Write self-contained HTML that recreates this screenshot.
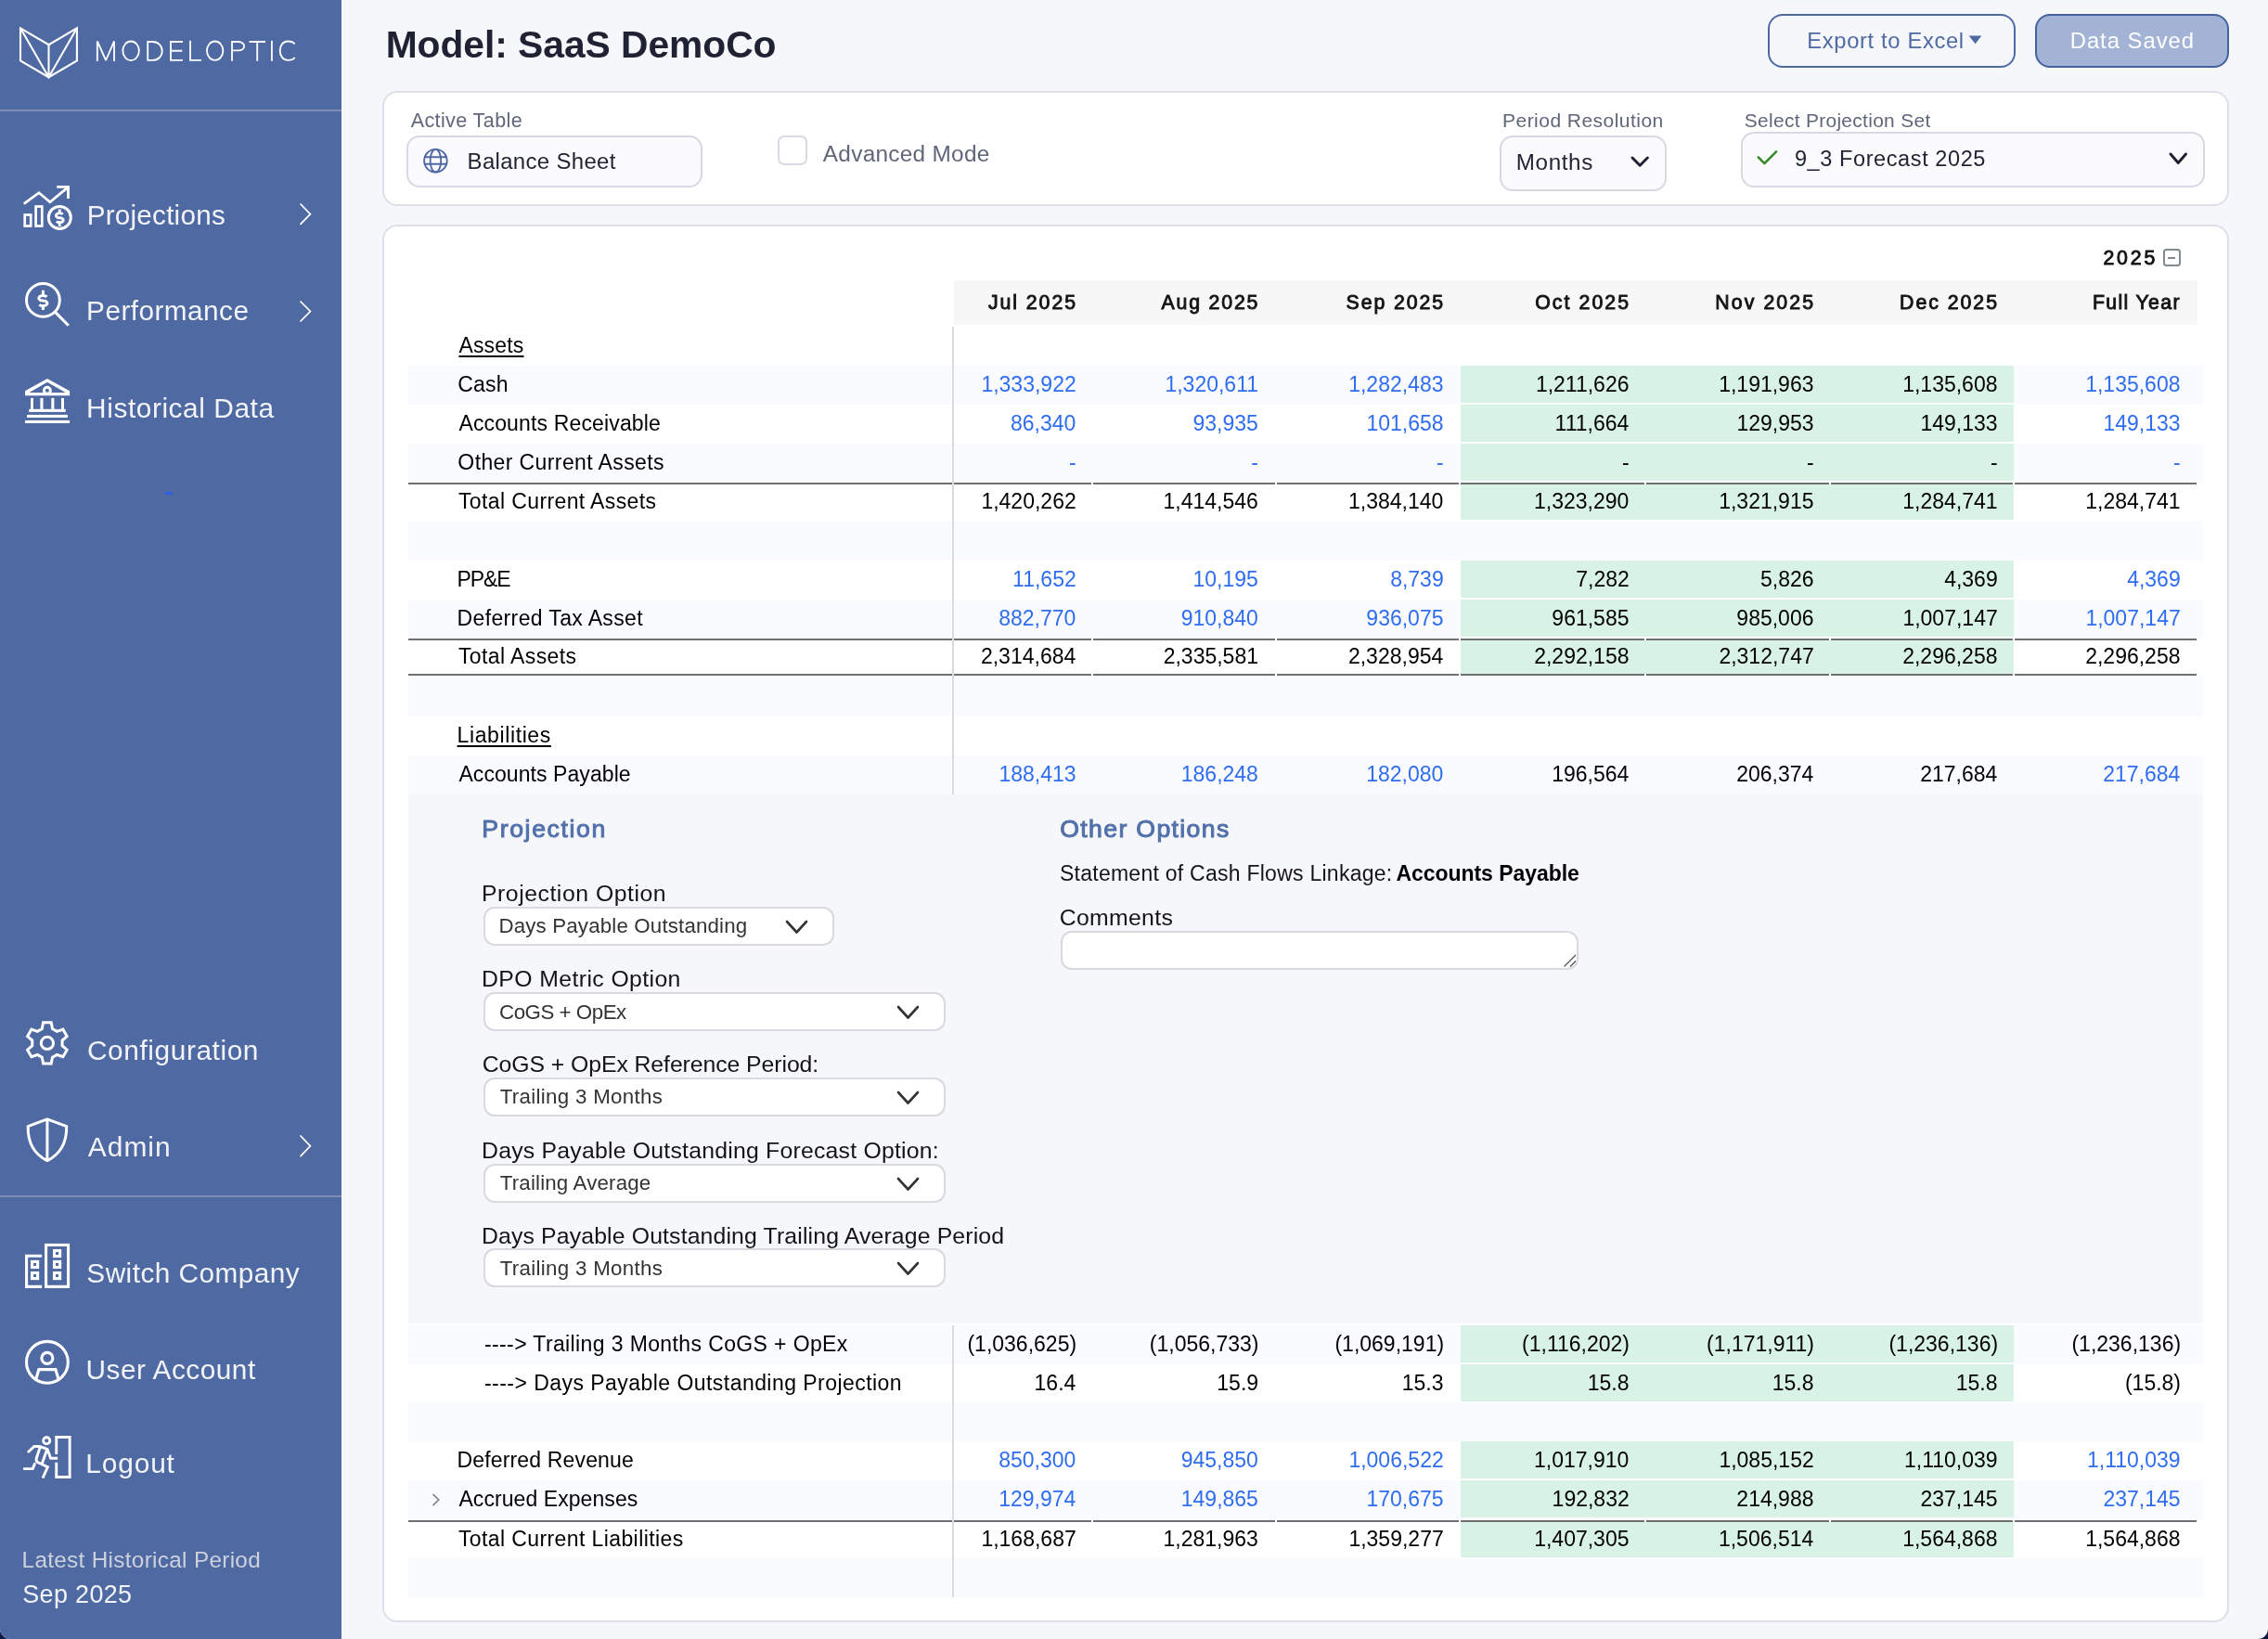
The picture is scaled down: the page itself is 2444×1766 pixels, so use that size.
<!DOCTYPE html><html><head><meta charset="utf-8"><title>ModelOptic</title><style>
html,body{margin:0;padding:0;width:2444px;height:1766px;overflow:hidden;background:#0c1b3f;}
#app{will-change:transform;position:absolute;left:0;top:0;width:2444px;height:1766px;background:#f6f7fb;border-radius:0 0 11px 11px;overflow:hidden;}
.t{position:absolute;white-space:nowrap;font-family:"Liberation Sans",sans-serif;}
.r{position:absolute;}
</style></head><body><div id="app">
<div class="r" style="left:0.00px;top:0.00px;width:368.00px;height:1766.00px;background:#4f6aa3;"></div>
<div class="r" style="left:368.00px;top:0.00px;width:1.00px;height:1766.00px;background:#ffffff;"></div>
<div class="r" style="left:0.00px;top:118.00px;width:368.00px;height:2.00px;background:#7d8db2;"></div>
<div class="r" style="left:0.00px;top:1288.00px;width:368.00px;height:2.00px;background:#7d8db2;"></div>
<svg class="r" style="left:15px;top:20px;width:80px;height:70px" viewBox="15 20 80 70"><g fill="none" stroke="#fff" stroke-width="2.1" stroke-linejoin="miter"><path d="M22,30.3 L52.5,48.2 L82.9,30.3 L82.9,65.5 L52.5,83.2 L22,65.5 Z"/><path d="M52.5,48.2 V83.2 M22,30.3 L52.5,83.2 L82.9,30.3"/></g></svg>
<svg class="r" style="left:95px;top:35px;width:235px;height:40px" viewBox="95 35 235 40"><g fill="none" stroke="#fbfcfe" stroke-width="1.85" stroke-linejoin="miter"><path d="M104.85,66 V44.4 L114.1,65 L123,44.4 V66" stroke-miterlimit="1.5"/><ellipse cx="141.1" cy="54.75" rx="8.75" ry="10.25"/><path d="M159.2,45 H164.5 C170.6,45 174.7,49.4 174.7,54.95 C174.7,60.5 170.6,64.9 164.5,64.9 H159.2 Z"/><path d="M197,45 H184 V64.9 H197 M184,54.7 H196.3"/><path d="M205,43.8 V64.9 H216.9"/><ellipse cx="231.65" cy="54.7" rx="8.7" ry="10.2"/><path d="M250,65.8 V45 H256.8 C260.8,45 263.1,47.4 263.1,49.7 C263.1,52.3 260.8,54.4 256.8,54.4 H250"/><path d="M268.5,45 H286 M277.2,45 V65.8"/><path d="M292.9,43.8 V65.8"/><path d="M317.7,47.5 C316,45.3 313.5,44.5 310.5,44.5 C305,44.5 301.7,49 301.7,54.7 C301.7,60.4 305,64.9 310.5,64.9 C313.5,64.9 316,64.1 317.7,62"/></g></svg>
<div class="t" style="top:214.04px;font-size:29.64px;line-height:35.57px;color:#f3f4f8;letter-spacing:0.255px;left:93.63px;">Projections</div>
<svg class="r" style="left:322px;top:218.2px;width:14.399999999999977px;height:25.400000000000006px" viewBox="322 218.2 14.399999999999977 25.400000000000006"><path d="M324,220.2 L334.4,230.89999999999998 L324,241.6" fill="none" stroke="#fff" stroke-width="1.75" stroke-linecap="round"/></svg>
<div class="t" style="top:317.47px;font-size:29.72px;line-height:35.66px;color:#f3f4f8;letter-spacing:0.469px;left:93.12px;">Performance</div>
<svg class="r" style="left:322px;top:323px;width:14.399999999999977px;height:25px" viewBox="322 323 14.399999999999977 25"><path d="M324,325 L334.4,335.5 L324,346" fill="none" stroke="#fff" stroke-width="1.75" stroke-linecap="round"/></svg>
<div class="t" style="top:421.57px;font-size:29.82px;line-height:35.78px;color:#f3f4f8;letter-spacing:0.575px;left:93.11px;">Historical Data</div>
<div class="t" style="top:1113.78px;font-size:29.81px;line-height:35.78px;color:#f3f4f8;letter-spacing:0.599px;left:94.01px;">Configuration</div>
<div class="t" style="top:1217.60px;font-size:29.89px;line-height:35.87px;color:#f3f4f8;letter-spacing:1.074px;left:94.70px;">Admin</div>
<svg class="r" style="left:322px;top:1222.2px;width:14.399999999999977px;height:25.59999999999991px" viewBox="322 1222.2 14.399999999999977 25.59999999999991"><path d="M324,1224.2 L334.4,1235.0 L324,1245.8" fill="none" stroke="#fff" stroke-width="1.75" stroke-linecap="round"/></svg>
<div class="t" style="top:1354.37px;font-size:29.72px;line-height:35.66px;color:#f3f4f8;letter-spacing:0.485px;left:93.36px;">Switch Company</div>
<div class="t" style="top:1457.83px;font-size:29.75px;line-height:35.70px;color:#f3f4f8;letter-spacing:0.527px;left:92.47px;">User Account</div>
<div class="t" style="top:1558.72px;font-size:29.87px;line-height:35.84px;color:#f3f4f8;letter-spacing:0.859px;left:92.31px;">Logout</div>
<div class="t" style="top:1665.99px;font-size:24.31px;line-height:29.17px;color:#cdd1dc;letter-spacing:0.319px;left:23.56px;">Latest Historical Period</div>
<div class="t" style="top:1702.44px;font-size:26.90px;line-height:32.28px;color:#f3f4f8;letter-spacing:0.366px;left:24.29px;">Sep 2025</div>
<div class="r" style="left:178.00px;top:530.00px;width:8.00px;height:3.00px;background:#2f5fe0;"></div>
<svg class="r" style="left:20px;top:195px;width:60px;height:60px" viewBox="20 195 60 60"><g fill="none" stroke="#fff" stroke-width="2.7" stroke-linejoin="miter" stroke-linecap="butt"><path d="M25.7,219.6 L42,207.6 L53.9,217.8 L72.2,202.6"/><path d="M61.2,201.4 H73.5 V213.9" stroke-width="2.9"/><rect x="26.7" y="231.5" width="6.5" height="12" /><rect x="38.6" y="222.5" width="6.7" height="21" /><circle cx="64.3" cy="234.4" r="12" stroke-width="3"/></g><path d="M67.69,230.88 A3.9,2.55 0 0 0 64.30,229.60 A3.9,2.55 0 0 0 60.40,232.15 A3.9,2.55 0 0 0 64.30,234.70 A3.9,2.55 0 0 1 68.20,237.25 A3.9,2.55 0 0 1 64.30,239.80 A3.9,2.55 0 0 1 60.91,238.53 M64.30,225.40 V229.60 M64.30,239.80 V243.90" fill="none" stroke="#fff" stroke-width="2.9"/></svg>
<svg class="r" style="left:20px;top:298px;width:60px;height:60px" viewBox="20 298 60 60"><g fill="none" stroke="#fff" stroke-width="3"><circle cx="46.4" cy="323.4" r="17.9"/><path d="M59.6,336.4 L73.8,350.7"/></g><path d="M50.40,319.89 A4.6,2.78 0 0 0 46.40,318.50 A4.6,2.78 0 0 0 41.80,321.27 A4.6,2.78 0 0 0 46.40,324.05 A4.6,2.78 0 0 1 51.00,326.83 A4.6,2.78 0 0 1 46.40,329.60 A4.6,2.78 0 0 1 42.40,328.21 M46.40,312.80 V318.50 M46.40,329.60 V334.00" fill="none" stroke="#fff" stroke-width="3"/></svg>
<svg class="r" style="left:20px;top:400px;width:60px;height:60px" viewBox="20 400 60 60"><g fill="#fff"><path fill-rule="evenodd" d="M27,421.2 L50.9,407.9 L75.1,421.2 V426.2 H27 Z M31.5,423 L50.9,411.8 L70.6,423 Z"/><rect x="33" y="428.9" width="2.9" height="12"/><rect x="43.4" y="428.9" width="3.1" height="12"/><rect x="55.3" y="428.9" width="3.1" height="12"/><rect x="66" y="428.9" width="3" height="12"/><rect x="31.2" y="440.8" width="39.5" height="3.1"/><rect x="29" y="446.9" width="43.9" height="3.1"/><rect x="27" y="452.9" width="48.1" height="3.1"/></g><circle cx="50.9" cy="420.7" r="3.45" fill="none" stroke="#fff" stroke-width="2.9"/></svg>
<svg class="r" style="left:20px;top:1095px;width:60px;height:60px" viewBox="20 1095 60 60"><g fill="none" stroke="#fff" stroke-width="3" stroke-linejoin="miter"><path d="M45.29,1108.49 L46.61,1101.81 L55.19,1101.81 L56.51,1108.49 L61.44,1111.34 L67.88,1109.14 L72.17,1116.57 L67.05,1121.05 L67.05,1126.75 L72.17,1131.23 L67.88,1138.66 L61.44,1136.46 L56.51,1139.31 L55.19,1145.99 L46.61,1145.99 L45.29,1139.31 L40.36,1136.46 L33.92,1138.66 L29.63,1131.23 L34.75,1126.75 L34.75,1121.05 L29.63,1116.57 L33.92,1109.14 L40.36,1111.34 Z"/><circle cx="50.9" cy="1123.9" r="6.6"/></g></svg>
<svg class="r" style="left:20px;top:1198px;width:60px;height:60px" viewBox="20 1198 60 60"><g fill="none" stroke="#fff" stroke-width="3" stroke-linejoin="round"><path d="M30.2,1213.6 L50.9,1205.8 L71.7,1213.6 C72,1229 66,1243 50.9,1250.6 C35.8,1243 29.8,1229 30.2,1213.6 Z"/><path d="M50.9,1206 V1250"/></g></svg>
<svg class="r" style="left:20px;top:1335px;width:60px;height:60px" viewBox="20 1335 60 60"><g fill="none" stroke="#fff" stroke-width="3.1" stroke-linejoin="miter"><rect x="49.55" y="1341.45" width="24" height="44.9"/><path d="M45.1,1353.3 H28.55 V1386.35 H45.1"/><rect x="34.5" y="1359.4" width="6.1" height="6.1"/><rect x="34.5" y="1371.5" width="6.1" height="6.1"/><rect x="58.5" y="1347.5" width="6.1" height="6.1"/><rect x="58.5" y="1359.4" width="6.1" height="6.1"/><rect x="58.5" y="1371.5" width="6.1" height="6.1"/></g></svg>
<svg class="r" style="left:20px;top:1438px;width:60px;height:60px" viewBox="20 1438 60 60"><g fill="none" stroke="#fff" stroke-width="3.1"><circle cx="50.9" cy="1467.8" r="22.4"/><circle cx="50.9" cy="1463.4" r="6"/><path d="M38.6,1486.5 L41.9,1475.6 H59.9 L63.2,1486.5" stroke-linejoin="miter"/></g></svg>
<svg class="r" style="left:20px;top:1540px;width:60px;height:60px" viewBox="20 1540 60 60"><g fill="none" stroke="#fff" stroke-width="2.9" stroke-linejoin="miter"><path d="M29.9,1565 L36.9,1558.5 L42.5,1558.5 L51,1561.3 L54.6,1571.2 L62.2,1571.2"/><path d="M43.2,1559.4 L39.2,1571.5 Q38.4,1574.6 41.4,1576 L51.4,1580.6 L46,1592.6"/><path d="M50.8,1561.5 L45.2,1577.2"/><path d="M37.8,1576.3 L35.3,1582.6 L25.1,1582.6"/><circle cx="50.2" cy="1552.3" r="3.6"/><path d="M60.75,1567 V1548.55 H75.15 V1591.45 H60.75 V1575.8"/></g></svg>
<div class="t" style="top:24.36px;font-size:40.82px;line-height:48.99px;color:#1f2233;font-weight:bold;letter-spacing:-0.053px;left:415.65px;">Model: SaaS DemoCo</div>
<div class="r" style="left:1904.60px;top:14.50px;width:267.80px;height:58.50px;box-sizing:border-box;border:2px solid #4f6aa3;border-radius:16px;background:transparent;"></div>
<div class="t" style="top:30.22px;font-size:23.75px;line-height:28.49px;color:#4f6aa3;letter-spacing:0.647px;left:1947.30px;">Export to Excel</div>
<svg class="r" style="left:2120px;top:36px;width:17px;height:14px" viewBox="2120 36 17 14"><path d="M2121.7,38.5 H2135.4 L2128.55,47.3 Z" fill="#4f6aa3"/></svg>
<div class="r" style="left:2193.30px;top:14.50px;width:208.40px;height:58.50px;box-sizing:border-box;border:2px solid #4562a0;border-radius:16px;background:#a2b3d6;"></div>
<div class="t" style="top:30.14px;font-size:23.84px;line-height:28.60px;color:#ffffff;letter-spacing:0.980px;left:2230.69px;">Data Saved</div>
<div class="r" style="left:411.80px;top:98.30px;width:1990.20px;height:123.50px;box-sizing:border-box;border:2px solid #dedfea;border-radius:16px;background:#ffffff;"></div>
<div class="t" style="top:116.59px;font-size:21.56px;line-height:25.87px;color:#5f6679;letter-spacing:0.379px;left:442.70px;">Active Table</div>
<div class="r" style="left:438.30px;top:146.00px;width:319.10px;height:55.60px;box-sizing:border-box;border:2px solid #d8d9e3;border-radius:14px;background:#fbfbfd;"></div>
<svg class="r" style="left:454px;top:158px;width:32px;height:32px" viewBox="454 158 32 32"><g fill="none" stroke="#4f6aa3" stroke-width="1.9"><circle cx="469.4" cy="173.2" r="12.3"/><ellipse cx="469.4" cy="173.2" rx="5.8" ry="12.3"/><path d="M457.3,169.2 H481.5 M457.3,176.8 H481.5"/></g></svg>
<div class="t" style="top:160.09px;font-size:23.99px;line-height:28.78px;color:#1f2233;letter-spacing:0.319px;left:503.58px;">Balance Sheet</div>
<div class="r" style="left:838.00px;top:146.00px;width:31.60px;height:31.80px;box-sizing:border-box;border:2px solid #d8d9e3;border-radius:7px;background:#ffffff;"></div>
<div class="t" style="top:150.91px;font-size:24.39px;line-height:29.27px;color:#5f6679;letter-spacing:0.281px;left:886.80px;">Advanced Mode</div>
<div class="t" style="top:117.20px;font-size:21.02px;line-height:25.23px;color:#5f6679;letter-spacing:0.461px;left:1619.02px;">Period Resolution</div>
<div class="r" style="left:1616.00px;top:145.80px;width:179.80px;height:60.20px;box-sizing:border-box;border:2px solid #d8d9e3;border-radius:14px;background:#fbfbfd;"></div>
<div class="t" style="top:160.26px;font-size:24.23px;line-height:29.07px;color:#1f2233;letter-spacing:0.623px;left:1633.76px;">Months</div>
<svg class="r" style="left:1756.2px;top:167.4px;width:22.399999999999864px;height:14.199999999999989px" viewBox="1756.2 167.4 22.399999999999864 14.199999999999989"><path d="M1759.2,170.4 L1767.4,178.6 L1775.6,170.4" fill="none" stroke="#1f2233" stroke-width="3" stroke-linecap="round" stroke-linejoin="round"/></svg>
<div class="t" style="top:116.87px;font-size:20.95px;line-height:25.14px;color:#5f6679;letter-spacing:0.306px;left:1879.76px;">Select Projection Set</div>
<div class="r" style="left:1876.20px;top:142.20px;width:499.60px;height:59.80px;box-sizing:border-box;border:2px solid #d8d9e3;border-radius:14px;background:#fbfbfd;"></div>
<svg class="r" style="left:1890px;top:158px;width:28px;height:24px" viewBox="1890 158 28 24"><path d="M1894.7,169.4 L1901.4,176.1 L1914.1,163.4" fill="none" stroke="#348a24" stroke-width="2.5" stroke-linecap="round" stroke-linejoin="round"/></svg>
<div class="t" style="top:156.52px;font-size:23.54px;line-height:28.25px;color:#1f2233;letter-spacing:0.581px;left:1933.94px;">9_3 Forecast 2025</div>
<svg class="r" style="left:2336px;top:163px;width:22.5px;height:15.5px" viewBox="2336 163 22.5 15.5"><path d="M2339,166 L2347.25,175.5 L2355.5,166" fill="none" stroke="#1f2233" stroke-width="3" stroke-linecap="round" stroke-linejoin="round"/></svg>
<div class="r" style="left:411.80px;top:242.00px;width:1990.20px;height:1506.00px;box-sizing:border-box;border:2px solid #dedfea;border-radius:16px;background:#ffffff;"></div>
<div class="t" style="top:265.94px;font-size:21.30px;line-height:25.56px;color:#111;letter-spacing:2.875px;left:2266.38px;-webkit-text-stroke:0.9px #111;">2025</div>
<div class="r" style="left:2331.00px;top:268.20px;width:18.80px;height:18.80px;box-sizing:border-box;border:2.2px solid #7f8b8d;border-radius:3.5px;background:#fff;"></div>
<div class="r" style="left:2336.20px;top:277.20px;width:8.30px;height:1.60px;background:#7f8b8d;"></div>
<div class="r" style="left:1028.00px;top:302.00px;width:1340.00px;height:48.00px;background:#f7f7f7;"></div>
<div class="t" style="top:313.84px;font-size:21.30px;line-height:25.56px;color:#141414;letter-spacing:1.922px;left:1065.03px;-webkit-text-stroke:0.9px #141414;">Jul 2025</div>
<div class="t" style="top:313.84px;font-size:21.30px;line-height:25.56px;color:#141414;letter-spacing:1.827px;left:1251.45px;-webkit-text-stroke:0.9px #141414;">Aug 2025</div>
<div class="t" style="top:313.84px;font-size:21.30px;line-height:25.56px;color:#141414;letter-spacing:1.892px;left:1450.59px;-webkit-text-stroke:0.9px #141414;">Sep 2025</div>
<div class="t" style="top:313.84px;font-size:21.30px;line-height:25.56px;color:#141414;letter-spacing:2.063px;left:1654.19px;-webkit-text-stroke:0.9px #141414;">Oct 2025</div>
<div class="t" style="top:313.84px;font-size:21.30px;line-height:25.56px;color:#141414;letter-spacing:2.070px;left:1848.35px;-webkit-text-stroke:0.9px #141414;">Nov 2025</div>
<div class="t" style="top:313.84px;font-size:21.30px;line-height:25.56px;color:#141414;letter-spacing:1.970px;left:2047.05px;-webkit-text-stroke:0.9px #141414;">Dec 2025</div>
<div class="t" style="top:313.84px;font-size:21.30px;line-height:25.56px;color:#141414;letter-spacing:1.333px;left:2254.95px;-webkit-text-stroke:0.9px #141414;">Full Year</div>
<div class="r" style="left:440.00px;top:394.00px;width:1934.00px;height:42.00px;background:#fafbfe;"></div>
<div class="r" style="left:440.00px;top:478.00px;width:1934.00px;height:42.00px;background:#fafbfe;"></div>
<div class="r" style="left:440.00px;top:562.00px;width:1934.00px;height:42.00px;background:#fafbfe;"></div>
<div class="r" style="left:440.00px;top:646.00px;width:1934.00px;height:42.00px;background:#fafbfe;"></div>
<div class="r" style="left:440.00px;top:728.00px;width:1934.00px;height:44.00px;background:#fafbfe;"></div>
<div class="r" style="left:440.00px;top:814.00px;width:1934.00px;height:42.00px;background:#fafbfe;"></div>
<div class="r" style="left:440.00px;top:1428.00px;width:1934.00px;height:42.00px;background:#fafbfe;"></div>
<div class="r" style="left:440.00px;top:1511.00px;width:1934.00px;height:42.00px;background:#fafbfe;"></div>
<div class="r" style="left:440.00px;top:1595.00px;width:1934.00px;height:43.00px;background:#fafbfe;"></div>
<div class="r" style="left:440.00px;top:1679.00px;width:1934.00px;height:42.00px;background:#fafbfe;"></div>
<div class="r" style="left:440.00px;top:856.00px;width:1934.00px;height:570.00px;background:#f6f7fb;"></div>
<div class="r" style="left:1574.00px;top:394.00px;width:596.00px;height:40.00px;background:#d9f2e6;"></div>
<div class="r" style="left:1574.00px;top:436.00px;width:596.00px;height:40.00px;background:#d9f2e6;"></div>
<div class="r" style="left:1574.00px;top:478.00px;width:596.00px;height:40.00px;background:#d9f2e6;"></div>
<div class="r" style="left:1574.00px;top:522.00px;width:596.00px;height:38.00px;background:#d9f2e6;"></div>
<div class="r" style="left:440.00px;top:520.00px;width:735.80px;height:2.00px;background:#6f6f6f;"></div>
<div class="r" style="left:1178.20px;top:520.00px;width:195.60px;height:2.00px;background:#6f6f6f;"></div>
<div class="r" style="left:1376.20px;top:520.00px;width:195.60px;height:2.00px;background:#6f6f6f;"></div>
<div class="r" style="left:1574.20px;top:520.00px;width:197.60px;height:2.00px;background:#6f6f6f;"></div>
<div class="r" style="left:1774.20px;top:520.00px;width:196.60px;height:2.00px;background:#6f6f6f;"></div>
<div class="r" style="left:1973.20px;top:520.00px;width:195.60px;height:2.00px;background:#6f6f6f;"></div>
<div class="r" style="left:2171.20px;top:520.00px;width:195.80px;height:2.00px;background:#6f6f6f;"></div>
<div class="r" style="left:1574.00px;top:604.00px;width:596.00px;height:40.00px;background:#d9f2e6;"></div>
<div class="r" style="left:1574.00px;top:646.00px;width:596.00px;height:40.00px;background:#d9f2e6;"></div>
<div class="r" style="left:1574.00px;top:690.00px;width:596.00px;height:35.60px;background:#d9f2e6;"></div>
<div class="r" style="left:440.00px;top:688.00px;width:735.80px;height:2.00px;background:#6f6f6f;"></div>
<div class="r" style="left:1178.20px;top:688.00px;width:195.60px;height:2.00px;background:#6f6f6f;"></div>
<div class="r" style="left:1376.20px;top:688.00px;width:195.60px;height:2.00px;background:#6f6f6f;"></div>
<div class="r" style="left:1574.20px;top:688.00px;width:197.60px;height:2.00px;background:#6f6f6f;"></div>
<div class="r" style="left:1774.20px;top:688.00px;width:196.60px;height:2.00px;background:#6f6f6f;"></div>
<div class="r" style="left:1973.20px;top:688.00px;width:195.60px;height:2.00px;background:#6f6f6f;"></div>
<div class="r" style="left:2171.20px;top:688.00px;width:195.80px;height:2.00px;background:#6f6f6f;"></div>
<div class="r" style="left:440.00px;top:725.60px;width:735.80px;height:2.00px;background:#6f6f6f;"></div>
<div class="r" style="left:1178.20px;top:725.60px;width:195.60px;height:2.00px;background:#6f6f6f;"></div>
<div class="r" style="left:1376.20px;top:725.60px;width:195.60px;height:2.00px;background:#6f6f6f;"></div>
<div class="r" style="left:1574.20px;top:725.60px;width:197.60px;height:2.00px;background:#6f6f6f;"></div>
<div class="r" style="left:1774.20px;top:725.60px;width:196.60px;height:2.00px;background:#6f6f6f;"></div>
<div class="r" style="left:1973.20px;top:725.60px;width:195.60px;height:2.00px;background:#6f6f6f;"></div>
<div class="r" style="left:2171.20px;top:725.60px;width:195.80px;height:2.00px;background:#6f6f6f;"></div>
<div class="r" style="left:1574.00px;top:1428.00px;width:596.00px;height:40.00px;background:#d9f2e6;"></div>
<div class="r" style="left:1574.00px;top:1470.00px;width:596.00px;height:40.00px;background:#d9f2e6;"></div>
<div class="r" style="left:1574.00px;top:1553.00px;width:596.00px;height:40.00px;background:#d9f2e6;"></div>
<div class="r" style="left:1574.00px;top:1595.00px;width:596.00px;height:40.00px;background:#d9f2e6;"></div>
<div class="r" style="left:1574.00px;top:1640.00px;width:596.00px;height:38.00px;background:#d9f2e6;"></div>
<div class="r" style="left:440.00px;top:1638.00px;width:735.80px;height:2.00px;background:#6f6f6f;"></div>
<div class="r" style="left:1178.20px;top:1638.00px;width:195.60px;height:2.00px;background:#6f6f6f;"></div>
<div class="r" style="left:1376.20px;top:1638.00px;width:195.60px;height:2.00px;background:#6f6f6f;"></div>
<div class="r" style="left:1574.20px;top:1638.00px;width:197.60px;height:2.00px;background:#6f6f6f;"></div>
<div class="r" style="left:1774.20px;top:1638.00px;width:196.60px;height:2.00px;background:#6f6f6f;"></div>
<div class="r" style="left:1973.20px;top:1638.00px;width:195.60px;height:2.00px;background:#6f6f6f;"></div>
<div class="r" style="left:2171.20px;top:1638.00px;width:195.80px;height:2.00px;background:#6f6f6f;"></div>
<div class="r" style="left:1026.00px;top:352.00px;width:2.00px;height:504.00px;background:#dcdcdc;"></div>
<div class="r" style="left:1026.00px;top:1428.00px;width:2.00px;height:293.00px;background:#dcdcdc;"></div>
<div class="t" style="top:358.53px;font-size:23.00px;line-height:27.60px;color:#000;letter-spacing:0.181px;left:494.40px;text-decoration:underline;text-underline-offset:3px;text-decoration-thickness:1.6px;">Assets</div>
<div class="t" style="top:400.53px;font-size:23.00px;line-height:27.60px;color:#000;letter-spacing:0.180px;left:493.25px;">Cash</div>
<div class="t" style="top:400.53px;font-size:23.00px;line-height:27.60px;color:#2f6df0;left:1057.40px;">1,333,922</div>
<div class="t" style="top:400.53px;font-size:23.00px;line-height:27.60px;color:#2f6df0;left:1255.41px;">1,320,611</div>
<div class="t" style="top:400.53px;font-size:23.00px;line-height:27.60px;color:#2f6df0;left:1453.17px;">1,282,483</div>
<div class="t" style="top:400.53px;font-size:23.00px;line-height:27.60px;color:#000;left:1654.89px;">1,211,626</div>
<div class="t" style="top:400.53px;font-size:23.00px;line-height:27.60px;color:#000;left:1852.17px;">1,191,963</div>
<div class="t" style="top:400.53px;font-size:23.00px;line-height:27.60px;color:#000;left:2050.17px;">1,135,608</div>
<div class="t" style="top:400.53px;font-size:23.00px;line-height:27.60px;color:#2f6df0;left:2247.17px;">1,135,608</div>
<div class="t" style="top:442.53px;font-size:23.00px;line-height:27.60px;color:#000;letter-spacing:0.146px;left:494.40px;">Accounts Receivable</div>
<div class="t" style="top:442.53px;font-size:23.00px;line-height:27.60px;color:#2f6df0;left:1089.02px;">86,340</div>
<div class="t" style="top:442.53px;font-size:23.00px;line-height:27.60px;color:#2f6df0;left:1285.54px;">93,935</div>
<div class="t" style="top:442.53px;font-size:23.00px;line-height:27.60px;color:#2f6df0;left:1472.38px;">101,658</div>
<div class="t" style="top:442.53px;font-size:23.00px;line-height:27.60px;color:#000;left:1675.60px;">111,664</div>
<div class="t" style="top:442.53px;font-size:23.00px;line-height:27.60px;color:#000;left:1871.38px;">129,953</div>
<div class="t" style="top:442.53px;font-size:23.00px;line-height:27.60px;color:#000;left:2069.38px;">149,133</div>
<div class="t" style="top:442.53px;font-size:23.00px;line-height:27.60px;color:#2f6df0;left:2266.38px;">149,133</div>
<div class="t" style="top:484.53px;font-size:23.00px;line-height:27.60px;color:#000;letter-spacing:0.391px;left:493.36px;">Other Current Assets</div>
<div class="t" style="top:484.53px;font-size:23.00px;line-height:27.60px;color:#2f6df0;left:1151.93px;">-</div>
<div class="t" style="top:484.53px;font-size:23.00px;line-height:27.60px;color:#2f6df0;left:1348.33px;">-</div>
<div class="t" style="top:484.53px;font-size:23.00px;line-height:27.60px;color:#2f6df0;left:1547.93px;">-</div>
<div class="t" style="top:484.53px;font-size:23.00px;line-height:27.60px;color:#000;left:1747.93px;">-</div>
<div class="t" style="top:484.53px;font-size:23.00px;line-height:27.60px;color:#000;left:1946.93px;">-</div>
<div class="t" style="top:484.53px;font-size:23.00px;line-height:27.60px;color:#000;left:2144.93px;">-</div>
<div class="t" style="top:484.53px;font-size:23.00px;line-height:27.60px;color:#2f6df0;left:2341.93px;">-</div>
<div class="t" style="top:526.53px;font-size:23.00px;line-height:27.60px;color:#000;letter-spacing:0.385px;left:493.94px;">Total Current Assets</div>
<div class="t" style="top:526.53px;font-size:23.00px;line-height:27.60px;color:#000;left:1057.40px;">1,420,262</div>
<div class="t" style="top:526.53px;font-size:23.00px;line-height:27.60px;color:#000;left:1253.57px;">1,414,546</div>
<div class="t" style="top:526.53px;font-size:23.00px;line-height:27.60px;color:#000;left:1453.06px;">1,384,140</div>
<div class="t" style="top:526.53px;font-size:23.00px;line-height:27.60px;color:#000;left:1653.06px;">1,323,290</div>
<div class="t" style="top:526.53px;font-size:23.00px;line-height:27.60px;color:#000;left:1852.17px;">1,321,915</div>
<div class="t" style="top:526.53px;font-size:23.00px;line-height:27.60px;color:#000;left:2050.28px;">1,284,741</div>
<div class="t" style="top:526.53px;font-size:23.00px;line-height:27.60px;color:#000;left:2247.28px;">1,284,741</div>
<div class="t" style="top:610.53px;font-size:23.00px;line-height:27.60px;color:#000;letter-spacing:-1.112px;left:492.56px;">PP&amp;E</div>
<div class="t" style="top:610.53px;font-size:23.00px;line-height:27.60px;color:#2f6df0;left:1091.10px;">11,652</div>
<div class="t" style="top:610.53px;font-size:23.00px;line-height:27.60px;color:#2f6df0;left:1285.54px;">10,195</div>
<div class="t" style="top:610.53px;font-size:23.00px;line-height:27.60px;color:#2f6df0;left:1498.13px;">8,739</div>
<div class="t" style="top:610.53px;font-size:23.00px;line-height:27.60px;color:#000;left:1698.25px;">7,282</div>
<div class="t" style="top:610.53px;font-size:23.00px;line-height:27.60px;color:#000;left:1897.02px;">5,826</div>
<div class="t" style="top:610.53px;font-size:23.00px;line-height:27.60px;color:#000;left:2095.13px;">4,369</div>
<div class="t" style="top:610.53px;font-size:23.00px;line-height:27.60px;color:#2f6df0;left:2292.13px;">4,369</div>
<div class="t" style="top:652.53px;font-size:23.00px;line-height:27.60px;color:#000;letter-spacing:0.363px;left:492.56px;">Deferred Tax Asset</div>
<div class="t" style="top:652.53px;font-size:23.00px;line-height:27.60px;color:#2f6df0;left:1076.26px;">882,770</div>
<div class="t" style="top:652.53px;font-size:23.00px;line-height:27.60px;color:#2f6df0;left:1272.66px;">910,840</div>
<div class="t" style="top:652.53px;font-size:23.00px;line-height:27.60px;color:#2f6df0;left:1472.37px;">936,075</div>
<div class="t" style="top:652.53px;font-size:23.00px;line-height:27.60px;color:#000;left:1672.37px;">961,585</div>
<div class="t" style="top:652.53px;font-size:23.00px;line-height:27.60px;color:#000;left:1871.37px;">985,006</div>
<div class="t" style="top:652.53px;font-size:23.00px;line-height:27.60px;color:#000;left:2050.40px;">1,007,147</div>
<div class="t" style="top:652.53px;font-size:23.00px;line-height:27.60px;color:#2f6df0;left:2247.40px;">1,007,147</div>
<div class="t" style="top:694.03px;font-size:23.00px;line-height:27.60px;color:#000;letter-spacing:0.396px;left:493.94px;">Total Assets</div>
<div class="t" style="top:694.03px;font-size:23.00px;line-height:27.60px;color:#000;left:1056.94px;">2,314,684</div>
<div class="t" style="top:694.03px;font-size:23.00px;line-height:27.60px;color:#000;left:1253.68px;">2,335,581</div>
<div class="t" style="top:694.03px;font-size:23.00px;line-height:27.60px;color:#000;left:1452.94px;">2,328,954</div>
<div class="t" style="top:694.03px;font-size:23.00px;line-height:27.60px;color:#000;left:1653.17px;">2,292,158</div>
<div class="t" style="top:694.03px;font-size:23.00px;line-height:27.60px;color:#000;left:1852.40px;">2,312,747</div>
<div class="t" style="top:694.03px;font-size:23.00px;line-height:27.60px;color:#000;left:2050.17px;">2,296,258</div>
<div class="t" style="top:694.03px;font-size:23.00px;line-height:27.60px;color:#000;left:2247.17px;">2,296,258</div>
<div class="t" style="top:778.53px;font-size:23.00px;line-height:27.60px;color:#000;letter-spacing:0.610px;left:492.56px;text-decoration:underline;text-underline-offset:3px;text-decoration-thickness:1.6px;">Liabilities</div>
<div class="t" style="top:820.53px;font-size:23.00px;line-height:27.60px;color:#000;letter-spacing:0.075px;left:494.40px;">Accounts Payable</div>
<div class="t" style="top:820.53px;font-size:23.00px;line-height:27.60px;color:#2f6df0;left:1076.38px;">188,413</div>
<div class="t" style="top:820.53px;font-size:23.00px;line-height:27.60px;color:#2f6df0;left:1272.78px;">186,248</div>
<div class="t" style="top:820.53px;font-size:23.00px;line-height:27.60px;color:#2f6df0;left:1472.26px;">182,080</div>
<div class="t" style="top:820.53px;font-size:23.00px;line-height:27.60px;color:#000;left:1672.14px;">196,564</div>
<div class="t" style="top:820.53px;font-size:23.00px;line-height:27.60px;color:#000;left:1871.14px;">206,374</div>
<div class="t" style="top:820.53px;font-size:23.00px;line-height:27.60px;color:#000;left:2069.14px;">217,684</div>
<div class="t" style="top:820.53px;font-size:23.00px;line-height:27.60px;color:#2f6df0;left:2266.14px;">217,684</div>
<div class="t" style="top:1434.53px;font-size:23.00px;line-height:27.60px;color:#000;letter-spacing:0.383px;left:521.97px;">----&gt; Trailing 3 Months CoGS + OpEx</div>
<div class="t" style="top:1434.53px;font-size:23.00px;line-height:27.60px;color:#000;left:1042.45px;">(1,036,625)</div>
<div class="t" style="top:1434.53px;font-size:23.00px;line-height:27.60px;color:#000;left:1238.85px;">(1,056,733)</div>
<div class="t" style="top:1434.53px;font-size:23.00px;line-height:27.60px;color:#000;left:1438.45px;">(1,069,191)</div>
<div class="t" style="top:1434.53px;font-size:23.00px;line-height:27.60px;color:#000;left:1640.06px;">(1,116,202)</div>
<div class="t" style="top:1434.53px;font-size:23.00px;line-height:27.60px;color:#000;left:1839.06px;">(1,171,911)</div>
<div class="t" style="top:1434.53px;font-size:23.00px;line-height:27.60px;color:#000;left:2035.45px;">(1,236,136)</div>
<div class="t" style="top:1434.53px;font-size:23.00px;line-height:27.60px;color:#000;left:2232.45px;">(1,236,136)</div>
<div class="t" style="top:1476.53px;font-size:23.00px;line-height:27.60px;color:#000;letter-spacing:0.456px;left:521.97px;">----&gt; Days Payable Outstanding Projection</div>
<div class="t" style="top:1476.53px;font-size:23.00px;line-height:27.60px;color:#000;left:1114.56px;">16.4</div>
<div class="t" style="top:1476.53px;font-size:23.00px;line-height:27.60px;color:#000;left:1311.30px;">15.9</div>
<div class="t" style="top:1476.53px;font-size:23.00px;line-height:27.60px;color:#000;left:1510.79px;">15.3</div>
<div class="t" style="top:1476.53px;font-size:23.00px;line-height:27.60px;color:#000;left:1710.79px;">15.8</div>
<div class="t" style="top:1476.53px;font-size:23.00px;line-height:27.60px;color:#000;left:1909.79px;">15.8</div>
<div class="t" style="top:1476.53px;font-size:23.00px;line-height:27.60px;color:#000;left:2107.78px;">15.8</div>
<div class="t" style="top:1476.53px;font-size:23.00px;line-height:27.60px;color:#000;left:2289.95px;">(15.8)</div>
<div class="t" style="top:1559.53px;font-size:23.00px;line-height:27.60px;color:#000;letter-spacing:0.151px;left:492.56px;">Deferred Revenue</div>
<div class="t" style="top:1559.53px;font-size:23.00px;line-height:27.60px;color:#2f6df0;left:1076.26px;">850,300</div>
<div class="t" style="top:1559.53px;font-size:23.00px;line-height:27.60px;color:#2f6df0;left:1272.66px;">945,850</div>
<div class="t" style="top:1559.53px;font-size:23.00px;line-height:27.60px;color:#2f6df0;left:1453.40px;">1,006,522</div>
<div class="t" style="top:1559.53px;font-size:23.00px;line-height:27.60px;color:#000;left:1653.06px;">1,017,910</div>
<div class="t" style="top:1559.53px;font-size:23.00px;line-height:27.60px;color:#000;left:1852.40px;">1,085,152</div>
<div class="t" style="top:1559.53px;font-size:23.00px;line-height:27.60px;color:#000;left:2052.01px;">1,110,039</div>
<div class="t" style="top:1559.53px;font-size:23.00px;line-height:27.60px;color:#2f6df0;left:2249.01px;">1,110,039</div>
<div class="t" style="top:1602.03px;font-size:23.00px;line-height:27.60px;color:#000;letter-spacing:0.072px;left:494.40px;">Accrued Expenses</div>
<svg class="r" style="left:462px;top:1605px;width:16px;height:22px" viewBox="462 1605 16 22"><path d="M466.9,1610.3 L472.8,1616 L466.9,1621.7" fill="none" stroke="#7b8587" stroke-width="1.6" stroke-linecap="round"/></svg>
<div class="t" style="top:1602.03px;font-size:23.00px;line-height:27.60px;color:#2f6df0;left:1076.14px;">129,974</div>
<div class="t" style="top:1602.03px;font-size:23.00px;line-height:27.60px;color:#2f6df0;left:1272.78px;">149,865</div>
<div class="t" style="top:1602.03px;font-size:23.00px;line-height:27.60px;color:#2f6df0;left:1472.38px;">170,675</div>
<div class="t" style="top:1602.03px;font-size:23.00px;line-height:27.60px;color:#000;left:1672.61px;">192,832</div>
<div class="t" style="top:1602.03px;font-size:23.00px;line-height:27.60px;color:#000;left:1871.37px;">214,988</div>
<div class="t" style="top:1602.03px;font-size:23.00px;line-height:27.60px;color:#000;left:2069.38px;">237,145</div>
<div class="t" style="top:1602.03px;font-size:23.00px;line-height:27.60px;color:#2f6df0;left:2266.38px;">237,145</div>
<div class="t" style="top:1644.53px;font-size:23.00px;line-height:27.60px;color:#000;letter-spacing:0.397px;left:493.94px;">Total Current Liabilities</div>
<div class="t" style="top:1644.53px;font-size:23.00px;line-height:27.60px;color:#000;left:1057.40px;">1,168,687</div>
<div class="t" style="top:1644.53px;font-size:23.00px;line-height:27.60px;color:#000;left:1253.57px;">1,281,963</div>
<div class="t" style="top:1644.53px;font-size:23.00px;line-height:27.60px;color:#000;left:1453.40px;">1,359,277</div>
<div class="t" style="top:1644.53px;font-size:23.00px;line-height:27.60px;color:#000;left:1653.17px;">1,407,305</div>
<div class="t" style="top:1644.53px;font-size:23.00px;line-height:27.60px;color:#000;left:1851.94px;">1,506,514</div>
<div class="t" style="top:1644.53px;font-size:23.00px;line-height:27.60px;color:#000;left:2050.17px;">1,564,868</div>
<div class="t" style="top:1644.53px;font-size:23.00px;line-height:27.60px;color:#000;left:2247.17px;">1,564,868</div>
<div class="t" style="top:877.62px;font-size:26.60px;line-height:31.92px;color:#5270aa;letter-spacing:1.624px;left:519.37px;-webkit-text-stroke:1.0px #5270aa;">Projection</div>
<div class="t" style="top:877.62px;font-size:26.60px;line-height:31.92px;color:#5270aa;letter-spacing:1.362px;left:1142.30px;-webkit-text-stroke:1.0px #5270aa;">Other Options</div>
<div class="t" style="top:947.92px;font-size:24.80px;line-height:29.76px;color:#141414;letter-spacing:0.524px;left:519.02px;">Projection Option</div>
<div class="t" style="top:1040.02px;font-size:24.80px;line-height:29.76px;color:#141414;letter-spacing:0.395px;left:519.02px;">DPO Metric Option</div>
<div class="t" style="top:1131.82px;font-size:24.80px;line-height:29.76px;color:#141414;letter-spacing:-0.075px;left:519.76px;">CoGS + OpEx Reference Period:</div>
<div class="t" style="top:1224.52px;font-size:24.80px;line-height:29.76px;color:#141414;letter-spacing:0.222px;left:519.02px;">Days Payable Outstanding Forecast Option:</div>
<div class="t" style="top:1316.52px;font-size:24.80px;line-height:29.76px;color:#141414;letter-spacing:0.140px;left:519.02px;">Days Payable Outstanding Trailing Average Period</div>
<div class="r" style="left:521.00px;top:976.80px;width:378.00px;height:42.20px;box-sizing:border-box;border:2px solid #d9d9de;border-radius:12px;background:#ffffff;"></div>
<div class="t" style="top:985.39px;font-size:22.30px;line-height:26.76px;color:#333;letter-spacing:0.165px;left:537.42px;">Days Payable Outstanding</div>
<svg class="r" style="left:844.5px;top:989.8px;width:27.0px;height:17.5px" viewBox="844.5 989.8 27.0 17.5"><path d="M847.5,992.8 L858.0,1004.3 L868.5,992.8" fill="none" stroke="#333" stroke-width="2.6" stroke-linecap="round" stroke-linejoin="round"/></svg>
<div class="r" style="left:521.00px;top:1069.00px;width:498.00px;height:42.20px;box-sizing:border-box;border:2px solid #d9d9de;border-radius:12px;background:#ffffff;"></div>
<div class="t" style="top:1077.59px;font-size:22.30px;line-height:26.76px;color:#333;letter-spacing:-0.480px;left:538.09px;">CoGS + OpEx</div>
<svg class="r" style="left:964.5px;top:1082px;width:27.0px;height:17.5px" viewBox="964.5 1082 27.0 17.5"><path d="M967.5,1085 L978.0,1096.5 L988.5,1085" fill="none" stroke="#333" stroke-width="2.6" stroke-linecap="round" stroke-linejoin="round"/></svg>
<div class="r" style="left:521.00px;top:1160.90px;width:498.00px;height:42.20px;box-sizing:border-box;border:2px solid #d9d9de;border-radius:12px;background:#ffffff;"></div>
<div class="t" style="top:1169.49px;font-size:22.30px;line-height:26.76px;color:#333;letter-spacing:0.310px;left:538.75px;">Trailing 3 Months</div>
<svg class="r" style="left:964.5px;top:1173.9px;width:27.0px;height:17.5px" viewBox="964.5 1173.9 27.0 17.5"><path d="M967.5,1176.9 L978.0,1188.4 L988.5,1176.9" fill="none" stroke="#333" stroke-width="2.6" stroke-linecap="round" stroke-linejoin="round"/></svg>
<div class="r" style="left:521.00px;top:1253.50px;width:498.00px;height:42.20px;box-sizing:border-box;border:2px solid #d9d9de;border-radius:12px;background:#ffffff;"></div>
<div class="t" style="top:1262.09px;font-size:22.30px;line-height:26.76px;color:#333;letter-spacing:0.171px;left:538.75px;">Trailing Average</div>
<svg class="r" style="left:964.5px;top:1266.5px;width:27.0px;height:17.5px" viewBox="964.5 1266.5 27.0 17.5"><path d="M967.5,1269.5 L978.0,1281.0 L988.5,1269.5" fill="none" stroke="#333" stroke-width="2.6" stroke-linecap="round" stroke-linejoin="round"/></svg>
<div class="r" style="left:521.00px;top:1345.00px;width:498.00px;height:42.20px;box-sizing:border-box;border:2px solid #d9d9de;border-radius:12px;background:#ffffff;"></div>
<div class="t" style="top:1353.59px;font-size:22.30px;line-height:26.76px;color:#333;letter-spacing:0.310px;left:538.75px;">Trailing 3 Months</div>
<svg class="r" style="left:964.5px;top:1358px;width:27.0px;height:17.5px" viewBox="964.5 1358 27.0 17.5"><path d="M967.5,1361 L978.0,1372.5 L988.5,1361" fill="none" stroke="#333" stroke-width="2.6" stroke-linecap="round" stroke-linejoin="round"/></svg>
<div class="t" style="top:927.63px;font-size:23.00px;line-height:27.60px;color:#141414;letter-spacing:0.256px;left:1141.96px;">Statement of Cash Flows Linkage:</div>
<div class="t" style="top:927.63px;font-size:23.00px;line-height:27.60px;color:#000;font-weight:bold;letter-spacing:-0.051px;left:1504.42px;">Accounts Payable</div>
<div class="t" style="top:973.52px;font-size:24.80px;line-height:29.76px;color:#141414;letter-spacing:0.314px;left:1141.76px;">Comments</div>
<div class="r" style="left:1143.00px;top:1002.80px;width:558.00px;height:42.40px;box-sizing:border-box;border:2px solid #d9d9de;border-radius:12px;background:#ffffff;"></div>
<svg class="r" style="left:1680px;top:1024px;width:20px;height:20px" viewBox="1680 1024 20 20"><path d="M1685.5,1041.5 L1698,1029 M1692,1041.5 L1698,1035.5" stroke="#555" stroke-width="1.3" fill="none"/></svg>
</div></body></html>
